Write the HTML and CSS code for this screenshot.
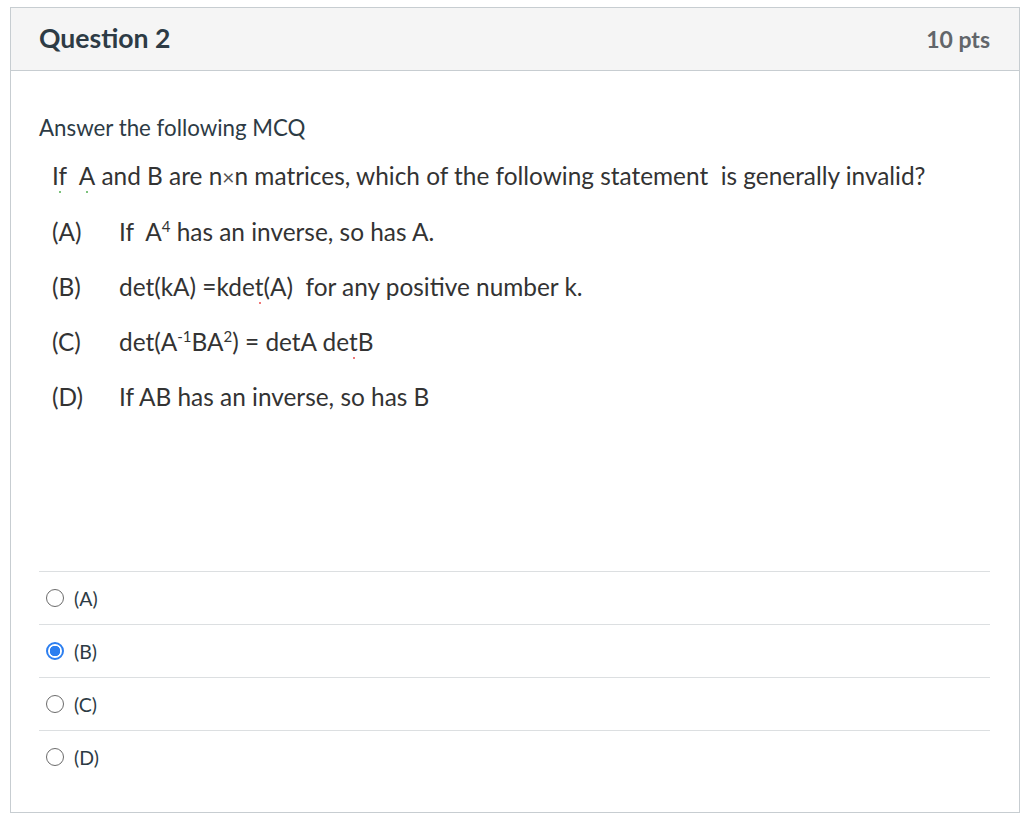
FILE: index.html
```html
<!DOCTYPE html>
<html>
<head>
<meta charset="utf-8">
<link rel="stylesheet" href="styles.css">
</head>
<body>
<div class="question">
  <div class="header">
    <h2 class="title">Question 2</h2>
    <div class="points">10 pts</div>
  </div>
  <div class="body">
    <p class="intro">Answer the following MCQ</p>
    <div class="image-text">
      <p class="stem"><span class="g">If</span>&nbsp; <span class="g">A</span> and B are n<span class="times">×</span>n matrices, which of the following statement&nbsp; is generally invalid?</p>
      <div class="opt"><span class="lbl">(A)</span><span class="txt">If&nbsp; A<sup>4</sup> has an inverse, so has A.</span></div>
      <div class="opt"><span class="lbl">(B)</span><span class="txt">det(kA) =kde<span class="r">t</span>(A)&nbsp; for any positive number k.</span></div>
      <div class="opt"><span class="lbl">(C)</span><span class="txt">det(A<sup>-1</sup>BA<sup>2</sup>) = detA de<span class="r">t</span>B</span></div>
      <div class="opt"><span class="lbl">(D)</span><span class="txt">If AB has an inverse, so has B</span></div>
    </div>
    <div class="answers">
      <label class="answer"><span class="radio"></span><span class="alabel">(A)</span></label>
      <label class="answer"><span class="radio checked"></span><span class="alabel">(B)</span></label>
      <label class="answer"><span class="radio"></span><span class="alabel">(C)</span></label>
      <label class="answer"><span class="radio"></span><span class="alabel">(D)</span></label>
    </div>
  </div>
</div>
</body>
</html>
```
FILE: styles.css
```css
html, body {
  margin: 0;
  padding: 0;
  background: #ffffff;
}
body {
  font-family: Lato, "Liberation Sans", sans-serif;
  color: #2d3b45;
}
.question {
  margin: 7px 0 0 10px;
  width: 1008px;
  height: 804px;
  border: 1px solid #c7cdd1;
  display: flex;
  flex-direction: column;
}
.header {
  height: 62px;
  background: #f5f5f5;
  border-bottom: 1px solid #c7cdd1;
  display: flex;
  align-items: center;
  justify-content: space-between;
  padding: 0 29px 0 28px;
}
.title {
  margin: 0 0 2px 0;
  font-size: 26.6px;
  font-weight: 700;
  color: #2d3b45;
}
.points {
  font-size: 23px;
  font-weight: 700;
  color: #62666a;
}
.body {
  flex: 1;
  padding: 0 29px 0 28px;
  display: flex;
  flex-direction: column;
}
.intro {
  margin: 42px 0 0 0;
  font-size: 22.3px;
  line-height: 30px;
}
.image-text {
  padding-left: 13px;
  color: #333333;
  font-size: 24.4px;
  height: 428px;
}
.stem {
  margin: 16px 0 0 0;
  line-height: 34px;
}
.opt {
  display: flex;
  height: 55px;
  align-items: center;
}
.stem + .opt {
  margin-top: 10px;
}
.lbl {
  width: 67px;
}
sup {
  font-size: 15px;
  vertical-align: 9px;
  line-height: 0;
}
.times {
  font-size: 21px;
  color: #555;
}
.g, .r {
  position: relative;
}
.g::after, .r::after {
  content: "";
  position: absolute;
  left: 45%;
  bottom: -3px;
  width: 2px;
  height: 2px;
  background: #7cc27c;
}
.r::after {
  background: #f07a7a;
}
.answers {
  display: flex;
  flex-direction: column;
}
.answer {
  display: flex;
  align-items: center;
  height: 52px;
  border-top: 1px solid #dcdfe1;
  padding-left: 7px;
  font-size: 19.5px;
}
.radio {
  width: 18px;
  height: 18px;
  border: 1px solid #6b6b6b;
  border-radius: 50%;
  box-sizing: border-box;
  margin-right: 10px;
  background: #fff;
}
.radio.checked {
  border: 2px solid #2d7ff0;
  background: radial-gradient(circle, #2d7ff0 0 5px, #fff 5.5px);
}
.alabel {
  color: #2d3b45;
}
```
